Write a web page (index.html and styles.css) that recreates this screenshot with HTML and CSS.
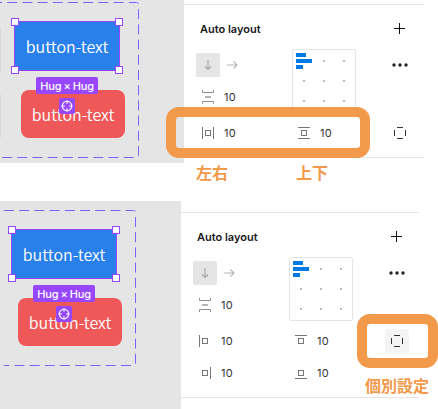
FILE: index.html
```html
<!DOCTYPE html>
<html lang="ja">
<head>
<meta charset="utf-8">
<title>Auto layout</title>
<link rel="stylesheet" href="styles.css">
</head>
<body>
<svg class="defs" width="0" height="0">
  <symbol id="down" viewBox="0 0 24 24"><path d="M12 7V16.5M9 13.5L12 16.5L15 13.5" fill="none" stroke="#a8a8a8" stroke-width="1.2"/></symbol>
  <symbol id="right" viewBox="0 0 24 24"><path d="M7 12H17M13.5 8.5L17 12L13.5 15.5" fill="none" stroke="#b5b5b5" stroke-width="1.1"/></symbol>
  <symbol id="gap" viewBox="0 0 24 24"><path d="M6.5 5V7.5H17.5V5M6.5 19V16.5H17.5V19" fill="none" stroke="#919191"/><path d="M9 12H15" stroke="#b5b5b5" stroke-width="2"/></symbol>
  <symbol id="sq" viewBox="0 0 24 24"><rect x="9.5" y="9.5" width="5" height="5" fill="none" stroke="#777"/></symbol>
  <symbol id="l" viewBox="0 0 24 24"><path d="M6.5 6V18" stroke="#777"/></symbol>
  <symbol id="r" viewBox="0 0 24 24"><path d="M17.5 6V18" stroke="#777"/></symbol>
  <symbol id="t" viewBox="0 0 24 24"><path d="M6 6.5H18" stroke="#777"/></symbol>
  <symbol id="b" viewBox="0 0 24 24"><path d="M6 17.5H18" stroke="#777"/></symbol>
  <symbol id="sides" viewBox="0 0 24 24"><path d="M9 6.5H15M9 17.5H15M6.5 9V15M17.5 9V15" stroke="#333"/></symbol>
  <symbol id="plus" viewBox="0 0 24 24"><path d="M6 11.5H17M11.5 6V17" stroke="#111"/></symbol>
  <symbol id="more" viewBox="0 0 24 24"><g fill="#222"><circle cx="6" cy="12" r="1.7"/><circle cx="12" cy="12" r="1.7"/><circle cx="18" cy="12" r="1.7"/></g></symbol>
  <symbol id="target" viewBox="0 0 16 16"><circle cx="8" cy="8" r="4.7" fill="none" stroke="#fff" stroke-width="1.1"/><path d="M8 2.3V6M8 10V13.7M2.3 8H6M10 8H13.7" stroke="#fff"/></symbol>
  <symbol id="align" viewBox="0 0 64 64"><rect x=".5" y=".5" width="63" height="63" rx="1.5" fill="#fff" stroke="#e5e5e5"/><path fill="#007be5" d="M4 4h10v4H4zM4 10h16v4H4zM4 16h7v4H4z"/><path fill="#bdbdbd" d="M31 11h2v2h-2zM51 11h2v2h-2zM11 31h2v2h-2zM31 31h2v2h-2zM51 31h2v2h-2zM11 51h2v2h-2zM31 51h2v2h-2zM51 51h2v2h-2z"/></symbol>
</svg>
<main class="sheet">
  <section class="example example-first">
    <div class="canvas">
      <svg class="frame" width="140" height="160"><path class="dash" d="M-8 2.5H136.5Q138.5 2.5 138.5 4.5V155.5Q138.5 157.5 136.5 157.5H0"/></svg>
      <i class="edge"></i>
      <div class="button red">button-text</div>
      <div class="button blue">button-text<i class="handle tl"></i><i class="handle tr"></i><i class="handle bl"></i><i class="handle br"></i></div>
      <div class="tag">Hug × Hug</div>
      <svg class="target"><use href="#target"/></svg>
    </div>
    <div class="panel">
      <header class="head"><h2>Auto layout</h2><svg class="icon"><use href="#plus"/></svg></header>
      <div class="grid">
        <div class="cell direction"><svg class="icon active"><use href="#down"/></svg><svg class="icon"><use href="#right"/></svg></div>
        <svg class="align"><use href="#align"/></svg>
        <svg class="icon"><use href="#more"/></svg>
        <div class="cell first"><svg class="icon"><use href="#gap"/></svg><span>10</span></div>
        <div class="cell first"><svg class="icon"><use href="#sq"/><use href="#l"/><use href="#r"/></svg><span>10</span></div>
        <div class="cell"><svg class="icon"><use href="#sq"/><use href="#t"/><use href="#b"/></svg><span>10</span></div>
        <svg class="icon"><use href="#sides"/></svg>
      </div>
    </div>
    <div class="mark mark-wide"></div>
    <div class="note note-x">左右</div>
    <div class="note note-y">上下</div>
  </section>
  <section class="example example-second">
    <div class="canvas">
      <svg class="frame" width="140" height="170"><path class="dash" d="M4 9.5H133.5Q135.5 9.5 135.5 11.5V162.5Q135.5 164.5 133.5 164.5H4"/></svg>
      <div class="button red">button-text</div>
      <div class="button blue">button-text<i class="handle tl"></i><i class="handle tr"></i><i class="handle bl"></i><i class="handle br"></i></div>
      <div class="tag">Hug × Hug</div>
      <svg class="target"><use href="#target"/></svg>
    </div>
    <div class="panel">
      <header class="head"><h2>Auto layout</h2><svg class="icon"><use href="#plus"/></svg></header>
      <div class="grid">
        <div class="cell direction"><svg class="icon active"><use href="#down"/></svg><svg class="icon"><use href="#right"/></svg></div>
        <svg class="align"><use href="#align"/></svg>
        <svg class="icon"><use href="#more"/></svg>
        <div class="cell first"><svg class="icon"><use href="#gap"/></svg><span>10</span></div>
        <div class="cell first"><svg class="icon"><use href="#sq"/><use href="#l"/></svg><span>10</span></div>
        <div class="cell"><svg class="icon"><use href="#sq"/><use href="#t"/></svg><span>10</span></div>
        <svg class="icon pressed"><use href="#sides"/></svg>
        <div class="cell first"><svg class="icon"><use href="#sq"/><use href="#r"/></svg><span>10</span></div>
        <div class="cell"><svg class="icon"><use href="#sq"/><use href="#b"/></svg><span>10</span></div>
      </div>
    </div>
    <div class="mark mark-small"></div>
    <div class="note note-each">個別設定</div>
  </section>
</main>
</body>
</html>
```

FILE: styles.css
```css
* { box-sizing: border-box; }
body { margin: 0; background: #fff; overflow: hidden; font-family: Inter, sans-serif; }
svg { display: block; }
.defs { position: absolute; }
.sheet { display: flex; flex-direction: column; gap: 38px; width: 438px; height: 409px; overflow: hidden; }
.example { position: relative; display: flex; align-items: flex-start; --dx: 0px; --dy: 0px; }
.example-first { height: 163px; }
.example-second { height: 208px; --dx: -3px; --dy: 7px; }

.canvas { position: relative; flex: none; width: 184px; height: 100%; background: #e5e5e5; }
.example-second .canvas { width: 181px; }
.frame { position: absolute; left: 0; top: 0; }
.dash { fill: none; stroke: #7b61ff; stroke-width: 1; stroke-dasharray: 10 5.2; }
.edge { position: absolute; left: 0; top: 28px; width: 1px; height: 110px; background: linear-gradient(#d9d9d9 0 40%, transparent 40% 60%, #d9d9d9 60%); }
.button { position: absolute; display: flex; align-items: center; justify-content: center; color: #fff; font: 350 16px/24px "Noto Sans CJK JP", sans-serif; }
.blue { left: calc(14px + var(--dx)); top: calc(21px + var(--dy)); width: 106px; height: 50px; border: 1px solid #9747ff; border-radius: 3px; background: #2980eb; }
.red { left: calc(21px + var(--dx)); top: calc(90px + var(--dy)); width: 104px; height: 48px; border-radius: 8px; background: #ee5858; }
.handle { position: absolute; width: 8px; height: 8px; border: 1px solid #9747ff; background: #fff; }
.tl, .tr { top: -4px; }
.bl, .br { bottom: -4px; }
.tl, .bl { left: -4px; }
.tr, .br { right: -4px; }
.tag { position: absolute; left: calc(36px + var(--dx)); top: calc(77px + var(--dy)); width: 62px; height: 17px; border-radius: 2px; background: #9747ff; color: #fff; font-size: 11px; font-weight: 500; line-height: 18px; letter-spacing: -.15px; word-spacing: -.7px; text-align: center; white-space: nowrap; }
.target { position: absolute; left: calc(59px + var(--dx)); top: calc(98px + var(--dy)); width: 16px; height: 16px; border-radius: 2px; background: #9747ff; }

.panel { width: 240px; height: 154px; margin-top: 4px; padding-left: 12px; border: solid #e5e5e5; border-width: 1px 0; }
.example-second .panel { width: 238px; height: 186px; margin-top: 11px; }
.head { display: flex; align-items: center; height: 48px; }
.head h2 { width: 192px; margin: 0; padding-left: 4px; color: #1a1a1a; font-size: 11px; font-weight: 600; line-height: 16px; }
.grid { display: grid; grid-template-columns: 96px 96px 24px; grid-template-rows: 24px 40px 32px 32px; align-items: center; }
.cell { display: flex; align-items: center; gap: 4px; color: #333; font-size: 11px; line-height: 16px; letter-spacing: .2px; }
.cell.first { grid-column: 1; }
.cell.direction { gap: 0; }
.icon { width: 24px; height: 24px; border-radius: 2px; }
.active { background: #e5e5e5; }
.pressed { background: #f4f4f4; }
.align { grid-row: 1 / 3; grid-column: 2; align-self: start; width: 64px; height: 64px; margin-top: -4px; }

.mark { position: absolute; border: 10px solid #f2994a; border-radius: 13px; }
.mark-wide { left: 166px; top: 107px; width: 204px; height: 51px; }
.mark-small { left: 357px; top: 113px; width: 81px; height: 54px; }
.note { position: absolute; color: #f2994a; font: 700 16px/24px "Noto Sans CJK JP", sans-serif; white-space: nowrap; }
.note-x { left: 196px; top: 160px; }
.note-y { left: 296px; top: 160px; }
.note-each { left: 365px; top: 172px; }
```
